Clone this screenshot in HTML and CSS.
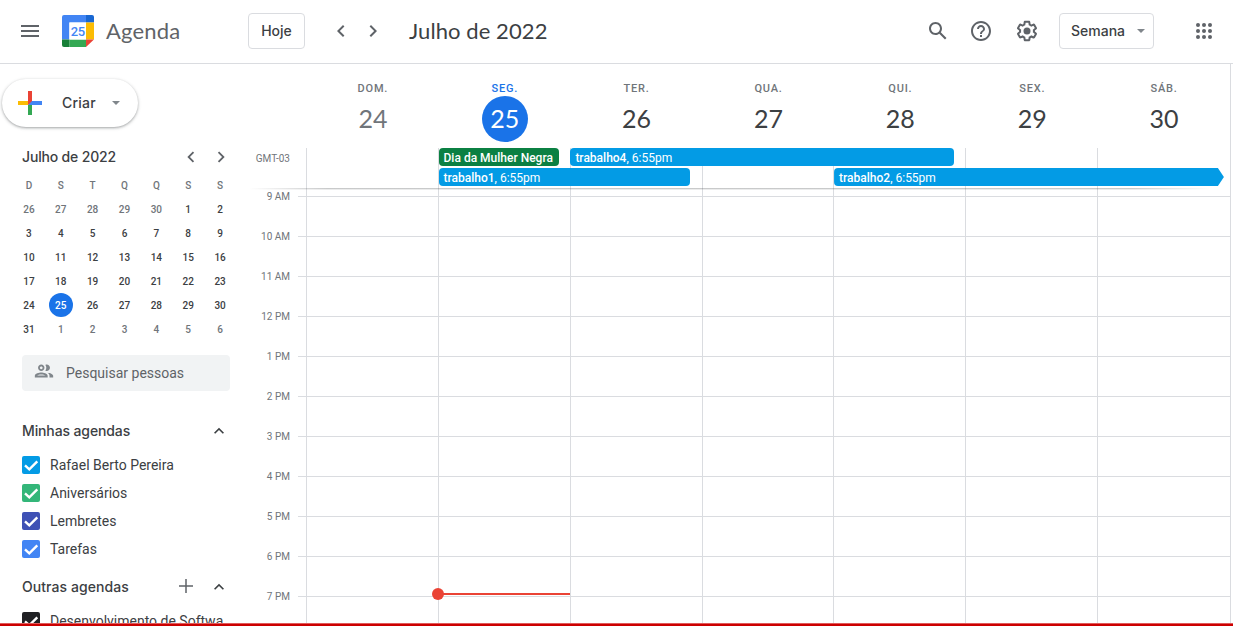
FILE: index.html
```html
<!DOCTYPE html>
<html lang="pt-BR">
<head>
<meta charset="utf-8">
<title>Agenda</title>
<link rel="stylesheet" href="styles.css">
</head>
<body>
<header class="topbar">
  <svg class="menu" viewBox="0 0 24 24"><path d="M3 18h18v-2H3v2zm0-5h18v-2H3v2zm0-7v2h18V6H3z"/></svg>
  <svg class="logo" viewBox="0 0 32 32">
    <path fill="#4285f4" d="M2 0h22v7.5H7.4V24.500H0V2a2 2 0 0 1 2-2z"/>
    <path fill="#1967d2" d="M24 0h6a2 2 0 0 1 2 2v5.500h-8z"/>
    <path fill="#fbbc04" d="M24 7.500h8v17h-8z"/>
    <path fill="#34a853" d="M7.400 24.500H24V32H7.400z"/>
    <path fill="#188038" d="M0 24.500h7.400V32H2a2 2 0 0 1-2-2z"/>
    <path fill="#ea4335" d="M24 24.500h8L24 32z"/>
    <path fill="#fff" d="M7.400 7.500H24v17H7.400z"/>
    <text x="15.700" y="20.500" text-anchor="middle" class="logo-day">25</text>
  </svg>
  <span class="brand">Agenda</span>
  <button class="btn today">Hoje</button>
  <svg class="nav prev" viewBox="0 0 24 24"><path d="M15.410 7.410 14 6l-6 6 6 6 1.410-1.410L10.830 12z"/></svg>
  <svg class="nav next" viewBox="0 0 24 24"><path d="M10 6 8.590 7.410 13.170 12l-4.580 4.590L10 18l6-6z"/></svg>
  <h1 class="period">Julho de 2022</h1>
  <div class="tools">
    <svg class="tool" viewBox="0 0 24 24"><path d="M20.490 19l-5.730-5.730C15.530 12.200 16 10.910 16 9.500 16 5.910 13.090 3 9.500 3S3 5.910 3 9.500 5.910 16 9.500 16c1.410 0 2.700-.47 3.770-1.240L19 20.490 20.490 19zM5 9.500C5 7.010 7.010 5 9.500 5S14 7.010 14 9.500 11.990 14 9.500 14 5 11.990 5 9.500z"/></svg>
    <svg class="tool" viewBox="0 0 24 24"><path d="M11 18h2v-2h-2v2zm1-16C6.480 2 2 6.480 2 12s4.480 10 10 10 10-4.480 10-10S17.520 2 12 2zm0 18c-4.410 0-8-3.590-8-8s3.590-8 8-8 8 3.590 8 8-3.590 8-8 8zm0-14c-2.210 0-4 1.790-4 4h2c0-1.100.9-2 2-2s2 .9 2 2c0 2-3 1.750-3 5h2c0-2.250 3-2.500 3-5 0-2.210-1.790-4-4-4z"/></svg>
    <svg class="tool" viewBox="0 0 24 24"><path d="M13.850 22.250h-3.700c-.74 0-1.360-.54-1.450-1.270l-.27-1.890c-.27-.14-.53-.29-.79-.46l-1.800.72c-.7.26-1.470-.03-1.810-.65L2.200 15.530c-.35-.66-.2-1.440.36-1.880l1.530-1.190c-.01-.15-.02-.3-.02-.46 0-.15.01-.31.02-.46l-1.520-1.190c-.59-.45-.74-1.260-.37-1.880l1.850-3.190c.34-.62 1.110-.9 1.790-.63l1.810.73c.26-.17.52-.32.78-.46l.27-1.910c.09-.7.71-1.250 1.440-1.250h3.700c.74 0 1.360.54 1.450 1.270l.27 1.890c.27.14.53.29.79.46l1.800-.72c.71-.26 1.480.03 1.820.65l1.840 3.180c.36.66.2 1.440-.36 1.880l-1.520 1.190c.01.15.02.3.02.46s-.01.31-.02.46l1.520 1.190c.56.45.72 1.230.37 1.860l-1.860 3.220c-.34.62-1.110.9-1.800.63l-1.800-.72c-.26.17-.52.32-.78.46l-.27 1.910c-.1.68-.72 1.220-1.460 1.220zm-3.230-2h2.760l.37-2.550.53-.22c.44-.18.88-.44 1.340-.78l.45-.34 2.380.96 1.380-2.400-2.030-1.580.07-.56c.03-.26.06-.51.06-.78s-.03-.53-.06-.78l-.07-.56 2.030-1.580-1.390-2.400-2.390.96-.45-.35c-.42-.32-.87-.58-1.330-.77l-.52-.22-.37-2.550h-2.760l-.37 2.550-.53.21c-.44.19-.88.44-1.340.79l-.45.33-2.380-.95-1.390 2.390 2.030 1.580-.07.56a7 7 0 0 0-.06.79c0 .26.02.53.06.78l.07.56-2.030 1.580 1.380 2.400 2.390-.96.45.35c.43.33.86.58 1.330.77l.53.22.38 2.550z"/><circle cx="12" cy="12" r="3.500"/></svg>
    <button class="btn view">Semana<i class="caret"></i></button>
    <svg class="apps" viewBox="0 0 24 24"><circle cx="6" cy="6" r="2"/><circle cx="12" cy="6" r="2"/><circle cx="18" cy="6" r="2"/><circle cx="6" cy="12" r="2"/><circle cx="12" cy="12" r="2"/><circle cx="18" cy="12" r="2"/><circle cx="6" cy="18" r="2"/><circle cx="12" cy="18" r="2"/><circle cx="18" cy="18" r="2"/></svg>
  </div>
</header>
<main class="main">
  <aside class="side">
    <button class="create">
      <svg class="plus" viewBox="0 0 24 24"><path fill="#4285f4" d="M12 10h12v4H10z"/><path fill="#34a853" d="M10 14h4v10h-4z"/><path fill="#fbbc04" d="M0 10h10v4H0z"/><path fill="#ea4335" d="M10 0h4v10l-4 4z"/></svg>
      <span>Criar</span><i class="caret"></i>
    </button>
    <div class="mini-head">
      <span class="mini-title">Julho de 2022</span>
      <svg class="mini-nav" viewBox="0 0 24 24"><path d="M15.410 7.410 14 6l-6 6 6 6 1.410-1.410L10.830 12z"/></svg>
      <svg class="mini-nav" viewBox="0 0 24 24"><path d="M10 6 8.590 7.410 13.170 12l-4.580 4.590L10 18l6-6z"/></svg>
    </div>
    <div class="mini">
      <span class="dim">D</span><span class="dim">S</span><span class="dim">T</span><span class="dim">Q</span><span class="dim">Q</span><span class="dim">S</span><span class="dim">S</span>
      <span class="dim">26</span><span class="dim">27</span><span class="dim">28</span><span class="dim">29</span><span class="dim">30</span><span>1</span><span>2</span>
      <span>3</span><span>4</span><span>5</span><span>6</span><span>7</span><span>8</span><span>9</span>
      <span>10</span><span>11</span><span>12</span><span>13</span><span>14</span><span>15</span><span>16</span>
      <span>17</span><span>18</span><span>19</span><span>20</span><span>21</span><span>22</span><span>23</span>
      <span>24</span><span class="sel">25</span><span>26</span><span>27</span><span>28</span><span>29</span><span>30</span>
      <span>31</span><span class="dim">1</span><span class="dim">2</span><span class="dim">3</span><span class="dim">4</span><span class="dim">5</span><span class="dim">6</span>
    </div>
    <div class="people">
      <svg viewBox="0 0 24 24"><path d="M9 13.750c-2.340 0-7 1.170-7 3.500V19h14v-1.750c0-2.330-4.660-3.500-7-3.500zM4.340 17c.84-.58 2.870-1.250 4.660-1.250s3.820.67 4.660 1.250H4.340zM9 12c1.930 0 3.500-1.570 3.500-3.500S10.930 5 9 5 5.500 6.570 5.500 8.500 7.070 12 9 12zm0-5c.83 0 1.500.67 1.500 1.500S9.830 10 9 10s-1.500-.67-1.500-1.500S8.170 7 9 7zm7.040 6.810c1.160.84 1.960 1.960 1.960 3.440V19h4v-1.750c0-2.020-3.500-3.170-5.960-3.440zM15 12c1.930 0 3.500-1.570 3.500-3.500S16.930 5 15 5c-.54 0-1.040.13-1.500.35.63.89 1 1.980 1 3.150s-.37 2.260-1 3.150c.46.22.96.35 1.500.35z"/></svg>
      <span>Pesquisar pessoas</span>
    </div>
    <div class="group-head mine">
      <span>Minhas agendas</span>
      <svg class="chev" viewBox="0 0 24 24"><path d="M12 8l-6 6 1.410 1.410L12 10.830l4.590 4.580L18 14z"/></svg>
    </div>
    <ul class="cals">
      <li><svg class="box c-blue" viewBox="0 0 18 18"><path d="M3 9.300 7.300 13.300l8-8"/></svg>Rafael Berto Pereira</li>
      <li><svg class="box c-green" viewBox="0 0 18 18"><path d="M3 9.300 7.300 13.300l8-8"/></svg>Aniversários</li>
      <li><svg class="box c-indigo" viewBox="0 0 18 18"><path d="M3 9.300 7.300 13.300l8-8"/></svg>Lembretes</li>
      <li><svg class="box c-sky" viewBox="0 0 18 18"><path d="M3 9.300 7.300 13.300l8-8"/></svg>Tarefas</li>
    </ul>
    <div class="group-head others">
      <span>Outras agendas</span>
      <svg class="add" viewBox="0 0 20 20"><path d="M9.250 3h1.500v6.250H17v1.500h-6.250V17h-1.500v-6.250H3v-1.500h6.250z"/></svg>
      <svg class="chev" viewBox="0 0 24 24"><path d="M12 8l-6 6 1.410 1.410L12 10.830l4.590 4.580L18 14z"/></svg>
    </div>
    <ul class="cals">
      <li><svg class="box c-black" viewBox="0 0 18 18"><path d="M3 9.300 7.300 13.300l8-8"/></svg>Desenvolvimento de Softwa</li>
    </ul>
  </aside>
  <section class="week">
    <div class="days">
      <div class="day past"><span>DOM.</span><b>24</b></div>
      <div class="day now"><span>SEG.</span><b>25</b></div>
      <div class="day"><span>TER.</span><b>26</b></div>
      <div class="day"><span>QUA.</span><b>27</b></div>
      <div class="day"><span>QUI.</span><b>28</b></div>
      <div class="day"><span>SEX.</span><b>29</b></div>
      <div class="day"><span>SÁB.</span><b>30</b></div>
    </div>
    <div class="board">
      <div class="lanes"><i></i><i></i><i></i><i></i><i></i><i></i><i></i></div>
      <div class="zone">GMT-03</div>
      <div class="allday">
        <div class="ev holiday"><b>Dia da Mulher Negra</b></div>
        <div class="ev job4"><b>trabalho4</b>, 6:55pm</div>
        <div class="ev job1"><b>trabalho1</b>, 6:55pm</div>
        <div class="ev job2"><b>trabalho2</b>, 6:55pm</div>
      </div>
      <div class="hours">
        <div class="hour"><span>9 AM</span></div>
        <div class="hour"><span>10 AM</span></div>
        <div class="hour"><span>11 AM</span></div>
        <div class="hour"><span>12 PM</span></div>
        <div class="hour"><span>1 PM</span></div>
        <div class="hour"><span>2 PM</span></div>
        <div class="hour"><span>3 PM</span></div>
        <div class="hour"><span>4 PM</span></div>
        <div class="hour"><span>5 PM</span></div>
        <div class="hour"><span>6 PM</span></div>
        <div class="hour"><span>7 PM</span></div>
        <div class="clock"></div>
      </div>
    </div>
  </section>
</main>
<footer class="strip"></footer>
</body>
</html>
```
FILE: styles.css
```css
* { box-sizing: border-box; }
body {
  margin: 0;
  height: 626px;
  overflow: hidden;
  display: flex;
  flex-direction: column;
  background: #fff;
  color: #3c4043;
  font-family: Roboto, "Liberation Sans", sans-serif;
}
button { background: #fff; color: #3c4043; padding: 0; }
svg { display: block; flex: none; fill: #5f6368; }

/* Top bar */
.topbar {
  flex: none;
  display: flex;
  align-items: center;
  height: 64px;
  padding: 0 17px 2px 18px;
  border-bottom: 1px solid #dadce0;
}
.menu { width: 24px; height: 24px; }
.logo { width: 32px; height: 32px; margin-left: 20px; }
.logo-day { font: 500 13px Roboto, sans-serif; letter-spacing: -.4px; fill: #4285f4; }
.brand {
  width: 142px;
  padding-left: 12px;
  font: 400 22px/28px Lato, sans-serif;
  letter-spacing: .2px;
  color: #5f6368;
}
.btn {
  height: 36px;
  border: 1px solid #dadce0;
  border-radius: 4px;
  font: 500 14px/20px Inter, sans-serif;
}
.today { width: 57px; margin: 0 0 0 12px; }
.nav { width: 24px; height: 24px; }
.prev { margin-left: 24px; }
.next { margin-left: 8px; }
.period {
  margin: 0 0 0 24px;
  font: 400 22px/28px Lato, sans-serif;
  letter-spacing: .08px;
}
.tools { display: flex; align-items: center; margin-left: auto; }
.tool { width: 24px; height: 24px; margin-right: 19px; }
.tool + .tool { margin-right: 22px; }
.tool + .tool + .tool { margin-right: 20px; }
.view {
  width: 95px;
  display: flex;
  align-items: center;
  justify-content: space-between;
  padding: 0 8px 0 11px;
}
.caret {
  border: 4px solid transparent;
  border-top-color: #80868b;
  border-bottom: 0;
}
.apps { width: 24px; height: 24px; margin-left: 38px; }

.main { flex: 1; min-height: 0; display: flex; overflow: hidden; }

/* Sidebar */
.side { width: 249px; flex: none; padding-top: 15px; }
.create {
  width: 136px;
  height: 48px;
  margin-left: 2px;
  display: flex;
  align-items: center;
  border: 0;
  border-radius: 24px;
  padding: 0 18px 0 16px;
  font: 500 14px/20px Inter, sans-serif;
  letter-spacing: .2px;
  box-shadow: 0 1px 2px rgba(60,64,67,.3), 0 1px 3px 1px rgba(60,64,67,.15);
}
.plus { width: 24px; height: 24px; margin-right: 20px; }
.create .caret { margin-left: auto; }
.mini-head {
  display: flex;
  align-items: center;
  height: 24px;
  margin-top: 18px;
  padding: 0 17px 0 22px;
}
.mini-title { flex: 1; font: 500 14px/20px Inter, sans-serif; letter-spacing: -.17px; }
.mini-nav { width: 22px; height: 22px; }
.mini-nav + .mini-nav { margin-left: 8px; }
.mini {
  display: grid;
  grid-template-columns: repeat(7, 1fr);
  grid-auto-rows: 24px;
  width: 223px;
  margin: 4px 0 0 13px;
  font: 500 10px/25px Roboto, sans-serif;
  text-align: center;
}
.mini .dim { color: #70757a; }
.mini .sel {
  width: 24px;
  height: 24px;
  justify-self: center;
  border-radius: 50%;
  background: #1a73e8;
  color: #fff;
}
.people {
  display: flex;
  align-items: center;
  gap: 11px;
  width: 208px;
  height: 36px;
  margin: 14px 0 0 22px;
  padding-left: 11px;
  border-radius: 4px;
  background: #f1f3f4;
  color: #5f6368;
  font-size: 14px;
}
.people svg { width: 22px; height: 22px; margin-bottom: 4px; fill: #80868b; }
.group-head {
  display: flex;
  align-items: center;
  height: 24px;
  padding: 0 20px 0 22px;
  font: 500 14px/20px Inter, sans-serif;
}
.mine { margin-top: 28px; letter-spacing: -.12px; }
.others { margin-top: 12px; letter-spacing: .06px; }
.group-head span { flex: 1; }
.chev { width: 20px; height: 20px; fill: #3c4043; }
.add { width: 20px; height: 20px; margin: 0 13px 2px 0; }
.cals { list-style: none; margin: 8px 0 0; padding: 0 0 0 22px; }
.cals li {
  display: flex;
  align-items: center;
  gap: 10px;
  height: 28px;
  font-size: 14px;
  white-space: nowrap;
}
.box { width: 18px; height: 18px; border-radius: 2px; }
.box path { fill: none; stroke: #fff; stroke-width: 2.4; }
.c-blue { background: #039be5; }
.c-green { background: #33b679; }
.c-indigo { background: #3f51b5; }
.c-sky { background: #4285f4; }
.c-black { background: #202124; }

/* Week view */
.week {
  width: 982px;
  border-right: 1px solid #dadce0;
  display: flex;
  flex-direction: column;
}
.days {
  flex: none;
  height: 84px;
  display: grid;
  grid-template-columns: repeat(7, 1fr);
  width: 923px;
  margin-left: 58px;
}
.day { display: flex; flex-direction: column; align-items: center; padding-top: 16px; }
.day span {
  height: 16px;
  font: 500 11px/17px Roboto, sans-serif;
  letter-spacing: .8px;
  color: #70757a;
}
.day b {
  width: 46px;
  height: 46px;
  border-radius: 50%;
  font: 400 25px/44px Lato, sans-serif;
  text-align: center;
}
.past b { color: #70757a; }
.now span { color: #1a73e8; }
.now b { background: #1a73e8; color: #fff; }
.board {
  flex: 1;
  min-height: 0;
  display: grid;
  grid-template-columns: 57px 924px;
  grid-template-rows: 40px 1fr;
}
.lanes {
  grid-area: 1 / 2 / 3 / 3;
  display: grid;
  grid-template-columns: repeat(7, 1fr);
  width: 923px;
}
.lanes i { border-left: 1px solid #dadce0; }
.zone {
  grid-area: 1 / 1;
  padding-right: 16px;
  font-size: 10px;
  line-height: 21px;
  text-align: right;
  color: #70757a;
}
.allday {
  grid-area: 1 / 2;
  display: grid;
  grid-template-columns: repeat(7, 131.857px);
  grid-template-rows: 18px 18px;
  row-gap: 2px;
}
.ev {
  height: 18px;
  margin: 0 11.5px 0 .7px;
  padding-left: 5px;
  border-radius: 4px;
  background: #039be5;
  color: #fff;
  font-size: 12px;
  line-height: 20px;
  white-space: nowrap;
}
.ev b { font-weight: 500; }
.holiday { grid-area: 1 / 2; margin-right: 10.6px; background: #0b8043; }
.job4 { grid-area: 1 / 3 / 2 / 6; }
.job1 { grid-area: 2 / 2 / 3 / 4; }
.job2 {
  grid-area: 2 / 5 / 3 / 8;
  margin-right: 5px;
  border-radius: 4px 0 0 4px;
  clip-path: polygon(0 0, calc(100% - 6px) 0, 100% 50%, calc(100% - 6px) 100%, 0 100%);
}
.hours {
  grid-area: 2 / 1 / 3 / 3;
  position: relative;
  padding-top: 8px;
  overflow: hidden;
  background: linear-gradient(90deg, transparent, rgba(60,64,67,.28) 8%, rgba(60,64,67,.28) 90%, transparent 98%) 0 0 / 100% 1px no-repeat,
    linear-gradient(90deg, transparent, rgba(60,64,67,.1) 8%, rgba(60,64,67,.1) 90%, transparent 98%) 0 1px / 100% 1px no-repeat;
}
.hour { height: 40px; display: flex; }
.hour span {
  width: 41px;
  height: 12px;
  margin: -6px 8px 0 0;
  font-size: 10px;
  line-height: 13px;
  text-align: right;
  color: #70757a;
}
.hour::after { content: ""; flex: 1; border-top: 1px solid #dadce0; }
/* Current-time marker laid over Monday's lane */
.clock {
  position: absolute;
  left: 189px;
  top: 405px;
  width: 132px;
  height: 2px;
  background: #ea4335;
}
.clock::before {
  content: "";
  position: absolute;
  left: -6px;
  top: -5px;
  width: 12px;
  height: 12px;
  border-radius: 50%;
  background: #ea4335;
}
.strip { flex: none; height: 3px; background: #c00; border-top: 1px solid #e05a5a; }
```
